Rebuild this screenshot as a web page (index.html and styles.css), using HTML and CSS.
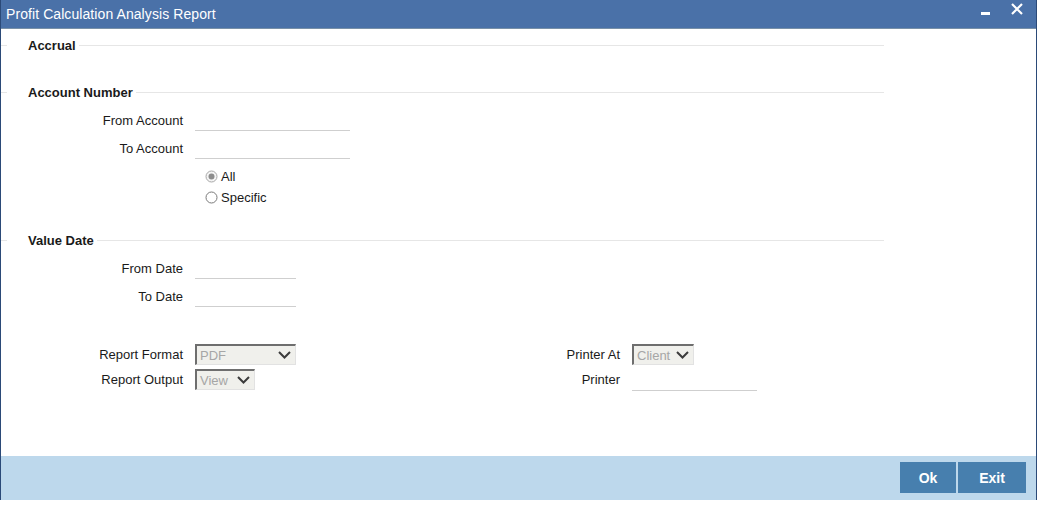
FILE: index.html
```html
<!DOCTYPE html>
<html lang="en">
<head>
    <meta charset="UTF-8">
    <title>Profit Calculation Analysis Report</title>
    <link rel="stylesheet" href="styles.css">
</head>
<body>

<div class="window">
    <div class="titlebar">
        <span class="title">Profit Calculation Analysis Report</span>
        <div class="win-btns">
            <span class="min-btn"></span>
            <svg class="close-btn" width="12" height="12" viewBox="0 0 12 12">
                <path d="M1 1 L11 11 M11 1 L1 11" stroke="#fff" stroke-width="2.2" fill="none"/>
            </svg>
        </div>
    </div>

    <div class="content">
        <div class="legend legend-first"><span>Accrual</span></div>

        <div class="legend legend-acc"><span>Account Number</span></div>
        <div class="row">
            <label>From Account</label>
            <input type="text" class="field field-wide">
        </div>
        <div class="row">
            <label>To Account</label>
            <input type="text" class="field field-wide">
        </div>
        <div class="radios">
            <div class="radio-row">
                <svg width="13" height="13" viewBox="0 0 13 13">
                    <circle cx="6.5" cy="6.5" r="5.5" fill="#f4f4f4" stroke="#a8a8a8"/>
                    <circle cx="6.5" cy="6.5" r="3" fill="#8c8c8c"/>
                </svg>
                <span>All</span>
            </div>
            <div class="radio-row">
                <svg width="13" height="13" viewBox="0 0 13 13">
                    <circle cx="6.5" cy="6.5" r="5.5" fill="#fff" stroke="#7a7a7a"/>
                </svg>
                <span>Specific</span>
            </div>
        </div>

        <div class="legend legend-date"><span>Value Date</span></div>
        <div class="row">
            <label>From Date</label>
            <input type="text" class="field field-date">
        </div>
        <div class="row">
            <label>To Date</label>
            <input type="text" class="field field-date">
        </div>

        <div class="report-grid">
            <label>Report Format</label>
            <div><div class="select sel-format"><span>PDF</span><svg width="13" height="8" viewBox="0 0 13 8"><path d="M1 1 L6.5 6.5 L12 1" stroke="#3c3c3c" stroke-width="2" fill="none"/></svg></div></div>
            <label>Printer At</label>
            <div><div class="select sel-printer"><span>Client</span><svg width="13" height="8" viewBox="0 0 13 8"><path d="M1 1 L6.5 6.5 L12 1" stroke="#3c3c3c" stroke-width="2" fill="none"/></svg></div></div>

            <label>Report Output</label>
            <div><div class="select sel-output"><span>View</span><svg width="13" height="8" viewBox="0 0 13 8"><path d="M1 1 L6.5 6.5 L12 1" stroke="#3c3c3c" stroke-width="2" fill="none"/></svg></div></div>
            <label>Printer</label>
            <div><input type="text" class="field field-printer"></div>
        </div>
    </div>

    <div class="footer">
        <button class="btn btn-ok">Ok</button>
        <button class="btn btn-exit">Exit</button>
    </div>
</div>

</body>
</html>
```

FILE: styles.css
```css
body {
    margin: 0;
    background: #fff;
    font-family: "Liberation Sans", Arial, sans-serif;
    font-size: 13px;
    color: #1a1a1a;
}
.window {
    width: 1035px;
    height: 500px;
    border-left: 1px solid #2b4a78;
    border-right: 1px solid #2b4a78;
    display: flex;
    flex-direction: column;
}
.titlebar {
    height: 28px;
    background: #4a71a8;
    border-bottom: 1px solid #7890a8;
    display: flex;
    align-items: center;
    justify-content: space-between;
    color: #fff;
}
.title {
    font-size: 14px;
    padding-left: 5px;
    padding-bottom: 1px;
    letter-spacing: 0.08px;
}
.win-btns {
    display: flex;
    align-items: flex-start;
    height: 28px;
    padding-right: 13px;
}
.min-btn {
    width: 9px;
    height: 3px;
    background: #fff;
    margin-top: 12px;
    margin-right: 21px;
}
.close-btn {
    margin-top: 3px;
}
.content {
    flex: 1;
}
.legend {
    width: 883px;
    height: 16px;
    display: flex;
    align-items: center;
    font-weight: bold;
}
.legend::before {
    content: "";
    width: 6px;
    border-top: 1px solid #e6e6e6;
    margin-right: 21px;
}
.legend::after {
    content: "";
    flex: 1;
    border-top: 1px solid #e6e6e6;
    margin-left: 3px;
}
.legend-first {
    margin-top: 8px;
}
.legend-acc {
    margin-top: 31px;
    margin-bottom: 6px;
}
.legend-date {
    margin-top: 24px;
    margin-bottom: 6px;
}
.row {
    display: flex;
    align-items: center;
    height: 28px;
}
.row label,
.report-grid label {
    width: 182px;
    text-align: right;
    margin-right: 12px;
}
.field {
    height: 22px;
    box-sizing: border-box;
    border: none;
    border-bottom: 1px solid #cfcfcf;
    padding: 0 4px;
    font: inherit;
    outline: none;
}
.field-wide {
    width: 155px;
}
.field-date {
    width: 101px;
}
.field-printer {
    width: 125px;
}
.radios {
    margin-top: 4px;
    padding-left: 204px;
}
.radio-row {
    display: flex;
    align-items: center;
    height: 21px;
    gap: 3px;
}
.report-grid {
    margin-top: 32px;
    display: grid;
    grid-template-columns: 194px 248px 189px auto;
    grid-auto-rows: 25px;
    align-items: center;
}
.report-grid label {
    width: auto;
}
.report-grid > div {
    display: flex;
    align-items: center;
}
.select {
    height: 21px;
    box-sizing: border-box;
    background: #f0f0ec;
    border-top: 2px solid #6e6e6e;
    border-left: 2px solid #6e6e6e;
    border-right: 1px solid #e2e2e2;
    border-bottom: 1px solid #e2e2e2;
    color: #a6a6a6;
    display: flex;
    align-items: center;
    justify-content: space-between;
    padding: 0 4px 0 3px;
}
.sel-format {
    width: 101px;
}
.sel-output {
    width: 60px;
}
.sel-printer {
    width: 62px;
}
.footer {
    height: 44px;
    background: #bdd8ec;
    display: flex;
    justify-content: flex-end;
    align-items: flex-start;
    padding: 6px 10px 0 0;
    box-sizing: border-box;
    gap: 2px;
}
.btn {
    height: 31px;
    border: none;
    background: #477fae;
    color: #fff;
    font-family: "Liberation Sans", Arial, sans-serif;
    font-size: 14px;
    font-weight: bold;
    padding: 0;
}
.btn-ok {
    width: 56px;
}
.btn-exit {
    width: 68px;
}
```
